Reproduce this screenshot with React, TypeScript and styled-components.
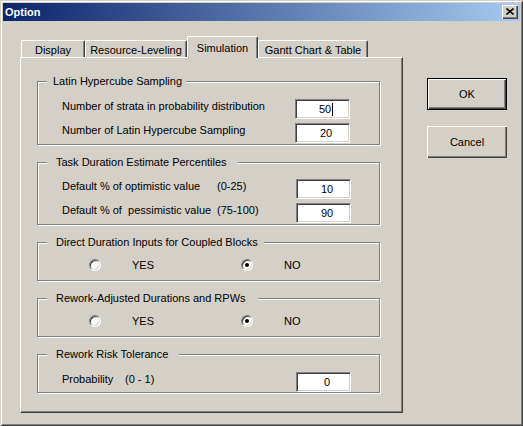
import React from "react";
import styled, { createGlobalStyle } from "styled-components";

const face = "#d4d0c8";
const shadow = "#808080";
const darkShadow = "#404040";
const highlight = "#ffffff";

const GlobalStyle = createGlobalStyle`
  html, body {
    margin: 0;
    padding: 0;
    background: ${face};
  }
  body {
    font-family: "Liberation Sans", Arial, sans-serif;
    font-size: 11px;
    color: #000;
  }
`;

const Window = styled.div`
  width: 523px;
  height: 426px;
  box-sizing: border-box;
  padding: 3px;
  background: ${face};
  display: flex;
  flex-direction: column;
  box-shadow: inset 1px 1px 0 ${face}, inset -1px -1px 0 ${darkShadow},
    inset 2px 2px 0 ${highlight}, inset -2px -2px 0 ${shadow};
`;

const TitleBar = styled.div`
  height: 18px;
  flex: none;
  display: flex;
  align-items: center;
  justify-content: space-between;
  padding: 0 2px;
  background: linear-gradient(to right, #0a246a, #a6caf0);
`;

const Title = styled.span`
  color: #fff;
  font-weight: bold;
  font-size: 11px;
  line-height: 14px;
`;

const CloseButton = styled.div`
  width: 16px;
  height: 14px;
  box-sizing: border-box;
  background: ${face};
  display: flex;
  align-items: center;
  justify-content: center;
  box-shadow: inset 1px 1px 0 ${highlight}, inset -1px -1px 0 ${darkShadow},
    inset -2px -2px 0 ${shadow};
  padding: 0 1px 1px 0;
`;

const Body = styled.div`
  flex: 1;
  display: flex;
`;

const LeftColumn = styled.div`
  margin: 15px 0 0 17px;
  display: flex;
  flex-direction: column;
`;

const TabStrip = styled.div`
  height: 21px;
  display: flex;
  align-items: flex-end;
  padding-left: 1px;
`;

const Tab = styled.div<{ $width: number; $active?: boolean }>`
  position: relative;
  z-index: ${(p) => (p.$active ? 1 : 0)};
  box-sizing: border-box;
  width: ${(p) => p.$width}px;
  height: ${(p) => (p.$active ? 22 : 17)}px;
  margin-bottom: ${(p) => (p.$active ? -1 : 0)}px;
  padding-top: ${(p) => (p.$active ? 0 : 1)}px;
  display: flex;
  align-items: center;
  justify-content: center;
  background: ${face};
  border-top: 1px solid ${highlight};
  border-left: 1px solid ${highlight};
  border-right: 1px solid ${darkShadow};
  border-radius: 2px 2px 0 0;
  box-shadow: inset -1px 0 0 ${shadow};
  white-space: nowrap;
`;

const Panel = styled.div`
  width: 383px;
  height: 356px;
  box-sizing: border-box;
  border-top: 1px solid ${highlight};
  border-left: 1px solid ${highlight};
  border-right: 1px solid ${darkShadow};
  border-bottom: 1px solid ${darkShadow};
  box-shadow: inset -1px -1px 0 ${shadow};
  padding: 23px 0 0 16px;
  display: flex;
  flex-direction: column;
  gap: 17px;
`;

const Group = styled.div<{ $height: number; $padTop: number }>`
  position: relative;
  box-sizing: border-box;
  width: 343px;
  height: ${(p) => p.$height}px;
  border: 1px solid ${shadow};
  box-shadow: 1px 1px 0 ${highlight}, inset 1px 1px 0 ${highlight};
  padding: ${(p) => p.$padTop}px 0 0 24px;
  display: flex;
  flex-direction: column;
  gap: 4px;
`;

const Caption = styled.span<{ $padLeft: number; $padRight: number }>`
  position: absolute;
  top: -7px;
  left: 9px;
  line-height: 13px;
  padding: 0 ${(p) => p.$padRight}px 0 ${(p) => p.$padLeft}px;
  background: ${face};
  white-space: nowrap;
`;

const FieldRow = styled.div<{ $cols: string }>`
  display: grid;
  grid-template-columns: ${(p) => p.$cols};
  align-items: start;
  height: 20px;
`;

const Label = styled.span`
  line-height: 15px;
  white-space: nowrap;
`;

const Field = styled.div`
  box-sizing: border-box;
  width: 55px;
  height: 20px;
  background: #fff;
  border-top: 1px solid ${shadow};
  border-left: 1px solid ${shadow};
  border-right: 1px solid ${highlight};
  border-bottom: 1px solid ${highlight};
  box-shadow: inset 1px 1px 0 ${darkShadow}, inset -1px -1px 0 ${face};
  display: flex;
  align-items: center;
  justify-content: center;
  padding-left: 7px;
  line-height: 14px;
`;

const Caret = styled.span`
  display: inline-block;
  width: 1px;
  height: 13px;
  margin-left: 1px;
  background: #000;
`;

const RadioRow = styled.div`
  display: flex;
  align-items: center;
  height: 12px;
  padding-left: 27px;
`;

const RadioOption = styled.div`
  flex: none;
  width: 152px;
  display: flex;
  align-items: center;
  gap: 31px;
`;

const RadioCircle = styled.span<{ $checked?: boolean }>`
  position: relative;
  box-sizing: border-box;
  width: 12px;
  height: 12px;
  flex: none;
  border-radius: 50%;
  background: #fff;
  border-top: 1px solid ${shadow};
  border-left: 1px solid ${shadow};
  border-right: 1px solid ${highlight};
  border-bottom: 1px solid ${highlight};
  box-shadow: inset 1px 1px 0 ${darkShadow}, inset -1px -1px 0 ${face};
  &::after {
    content: "";
    display: ${(p) => (p.$checked ? "block" : "none")};
    position: absolute;
    left: 3px;
    top: 3px;
    width: 4px;
    height: 4px;
    border-radius: 50%;
    background: #000;
  }
`;

const RadioText = styled.span`
  line-height: 13px;
`;

const RightColumn = styled.div`
  margin: 57px 0 0 24px;
  display: flex;
  flex-direction: column;
  gap: 16px;
`;

const Button = styled.div<{ $default?: boolean }>`
  box-sizing: border-box;
  width: 80px;
  height: 32px;
  display: flex;
  align-items: center;
  justify-content: center;
  background: ${face};
  border: ${(p) => (p.$default ? "1px solid #000" : "none")};
  box-shadow: inset 1px 1px 0 ${highlight}, inset -1px -1px 0 ${darkShadow},
    inset -2px -2px 0 ${shadow};
`;

const Radio = ({ label, checked }: { label: string; checked?: boolean }) => (
  <RadioOption>
    <RadioCircle $checked={checked} />
    <RadioText>{label}</RadioText>
  </RadioOption>
);

export default function App() {
  return (
    <>
      <GlobalStyle />
      <Window>
        <TitleBar>
          <Title>Option</Title>
          <CloseButton>
            <svg width="8" height="7" viewBox="0 0 8 7">
              <path d="M0.5 0.5 L7.5 6.5 M7.5 0.5 L0.5 6.5" stroke="#000" strokeWidth="1.6" />
            </svg>
          </CloseButton>
        </TitleBar>
        <Body>
          <LeftColumn>
            <TabStrip>
              <Tab $width={64}>Display</Tab>
              <Tab $width={102}>Resource-Leveling</Tab>
              <Tab $width={71} $active>
                Simulation
              </Tab>
              <Tab $width={110}>Gantt Chart &amp; Table</Tab>
            </TabStrip>
            <Panel>
              <Group $height={64} $padTop={17}>
                <Caption $padLeft={6} $padRight={4}>Latin Hypercube Sampling</Caption>
                <FieldRow $cols="233px 55px">
                  <Label>Number of strata in probability distribution</Label>
                  <Field>
                    50
                    <Caret />
                  </Field>
                </FieldRow>
                <FieldRow $cols="233px 55px">
                  <Label>Number of Latin Hypercube Sampling</Label>
                  <Field>20</Field>
                </FieldRow>
              </Group>

              <Group $height={63} $padTop={16}>
                <Caption $padLeft={9} $padRight={11}>Task Duration Estimate Percentiles</Caption>
                <FieldRow $cols="155px 79px 55px">
                  <Label>Default % of optimistic value</Label>
                  <Label>(0-25)</Label>
                  <Field>10</Field>
                </FieldRow>
                <FieldRow $cols="155px 79px 55px">
                  <Label>Default % of&nbsp; pessimistic value</Label>
                  <Label>(75-100)</Label>
                  <Field>90</Field>
                </FieldRow>
              </Group>

              <Group $height={39} $padTop={16}>
                <Caption $padLeft={9} $padRight={6}>Direct Duration Inputs for Coupled Blocks</Caption>
                <RadioRow>
                  <Radio label="YES" />
                  <Radio label="NO" checked />
                </RadioRow>
              </Group>

              <Group $height={39} $padTop={16}>
                <Caption $padLeft={9} $padRight={12}>Rework-Adjusted Durations and RPWs</Caption>
                <RadioRow>
                  <Radio label="YES" />
                  <Radio label="NO" checked />
                </RadioRow>
              </Group>

              <Group $height={39} $padTop={17}>
                <Caption $padLeft={9} $padRight={11}>Rework Risk Tolerance</Caption>
                <FieldRow $cols="63px 171px 55px">
                  <Label>Probability</Label>
                  <Label>(0 - 1)</Label>
                  <Field>0</Field>
                </FieldRow>
              </Group>
            </Panel>
          </LeftColumn>
          <RightColumn>
            <Button $default>OK</Button>
            <Button>Cancel</Button>
          </RightColumn>
        </Body>
      </Window>
    </>
  );
}
